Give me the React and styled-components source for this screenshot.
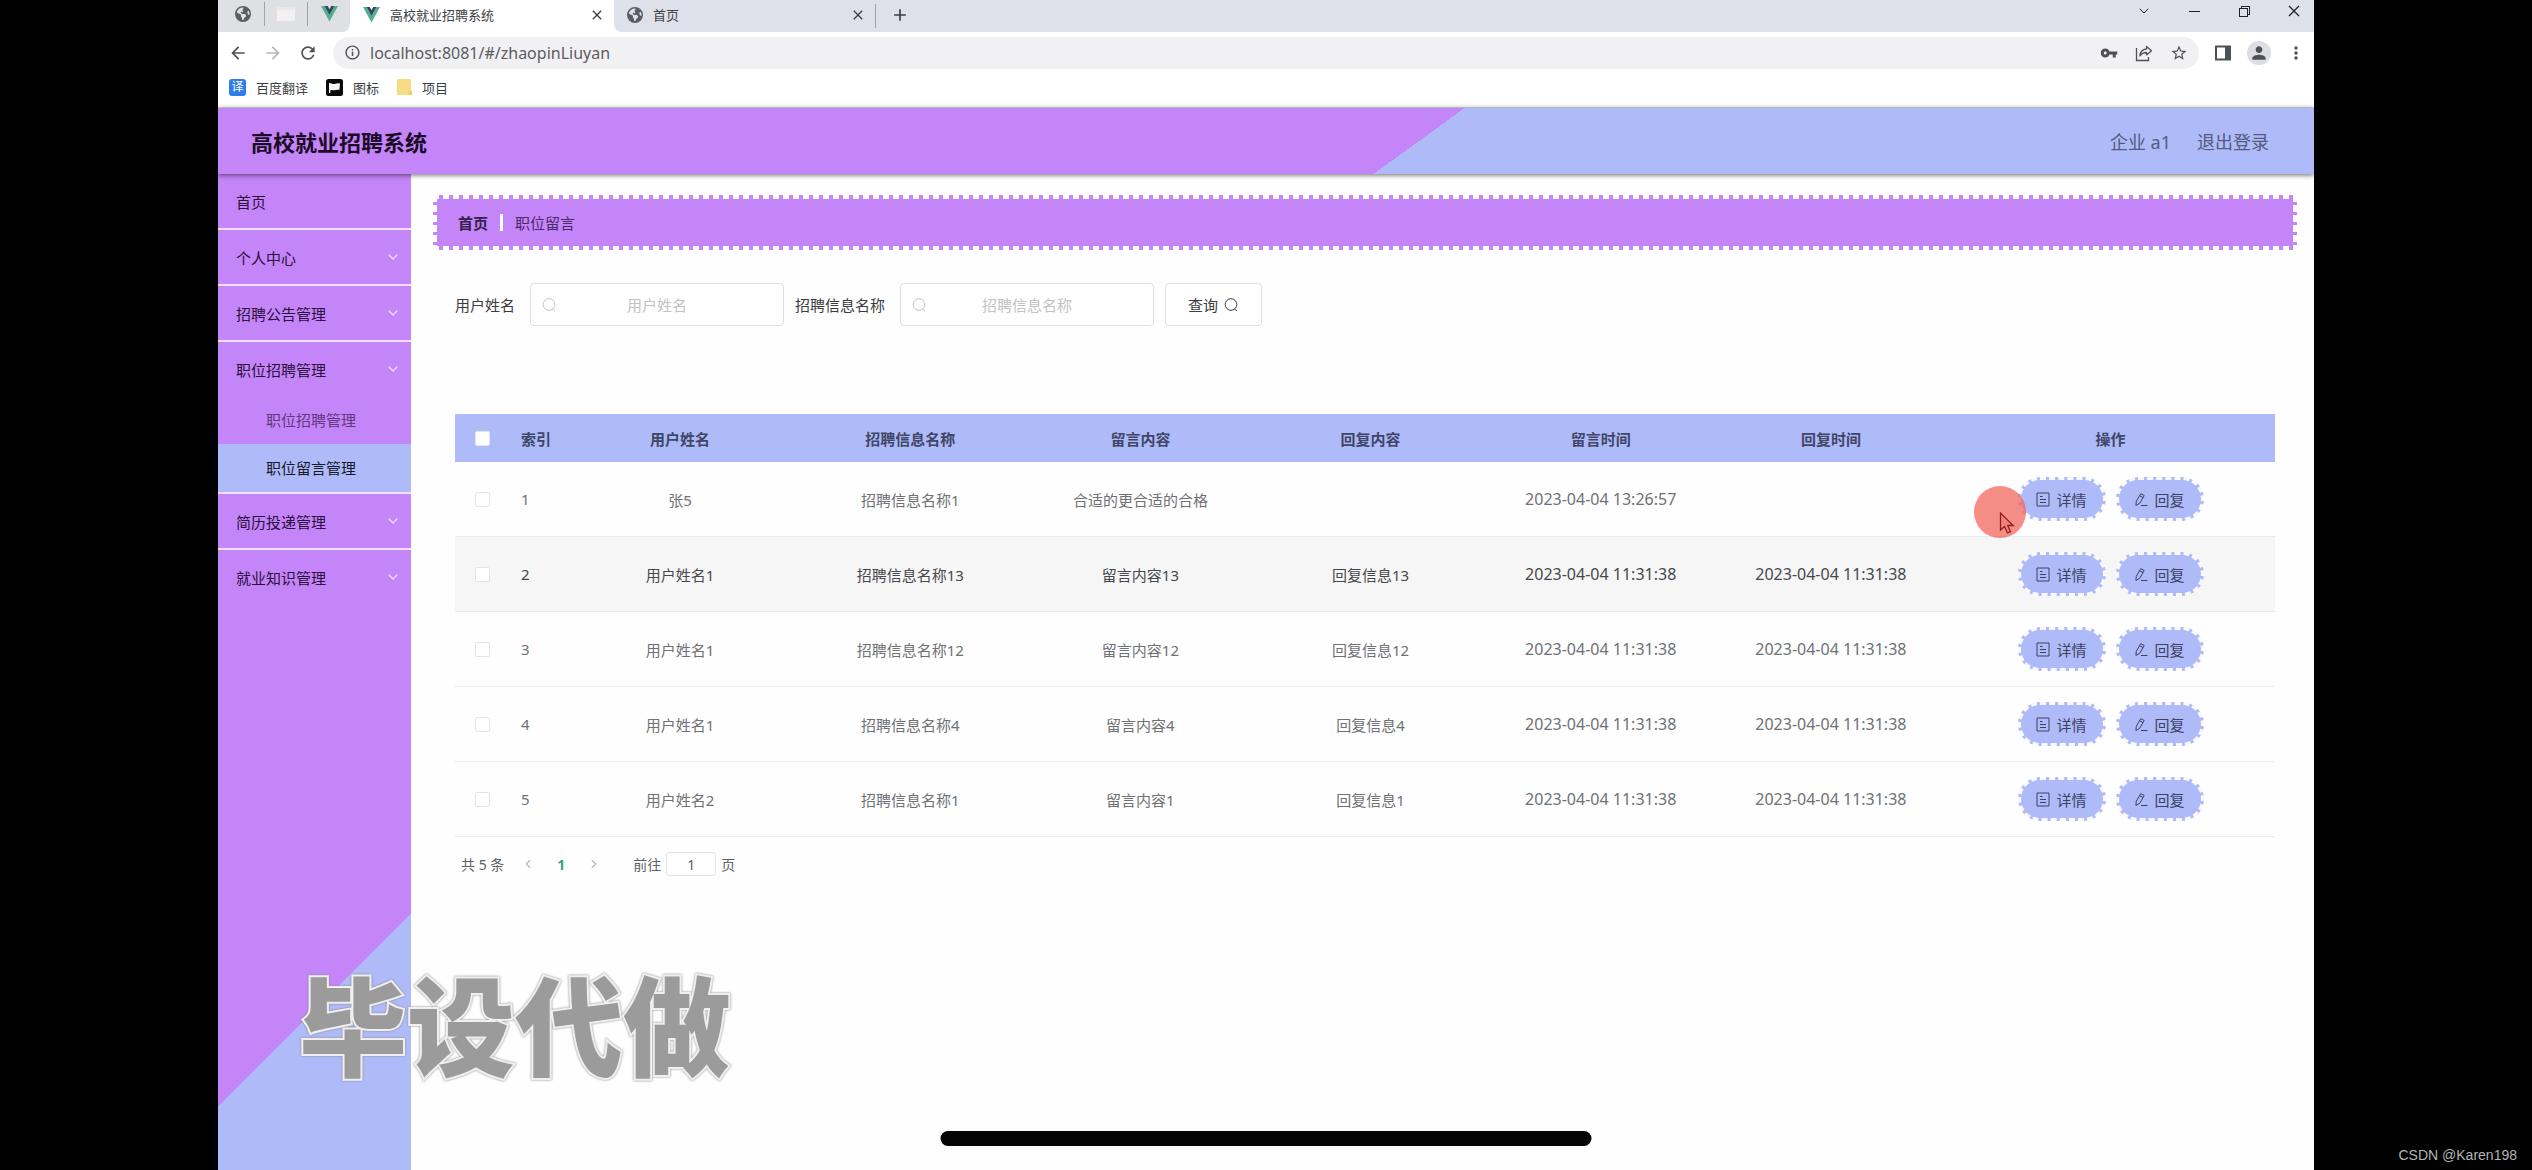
import React from 'react';
import styled, { createGlobalStyle, css } from 'styled-components';
import {
  MdAdd,
  MdArrowBack,
  MdArrowForward,
  MdClose,
  MdInfoOutline,
  MdMoreVert,
  MdPerson,
  MdRefresh,
  MdStarBorder,
  MdVpnKey,
} from 'react-icons/md';
import { FaEarthAmericas } from 'react-icons/fa6';
import { VscChromeClose, VscChromeMinimize, VscChromeRestore } from 'react-icons/vsc';
import { ChevronDown, ChevronLeft, ChevronRight } from 'lucide-react';

const purple = '#c485f9';
const blue = '#afbaf8';

const GlobalStyle = createGlobalStyle`
  * {
    box-sizing: border-box;
  }

  body {
    margin: 0;
    background: #000;
    color: #606266;
    font-family: 'Noto Sans', 'Noto Sans CJK SC', sans-serif;
    font-size: 15px;
  }

  button,
  input {
    font: inherit;
    color: inherit;
  }

  button {
    padding: 0;
    border: 0;
    background: none;
    cursor: pointer;
  }

  a {
    color: inherit;
    text-decoration: none;
  }

  svg {
    display: block;
    flex: none;
  }
`;

const Stage = styled.div`
  position: relative;
  min-height: 100vh;
  padding: 0 218px;
  display: flex;
  overflow: hidden;
`;

const Screen = styled.div`
  position: relative;
  flex: 1;
  min-width: 0;
  display: flex;
  flex-direction: column;
  background: #fefefe;
`;

/* ---------- browser chrome ---------- */

const TabStrip = styled.div`
  display: flex;
  height: 32px;
  background: #fff;
  font-size: 13px;
  color: #3c4043;
`;

const PinnedTabs = styled.div`
  display: flex;
  align-items: center;
  width: 132px;
  padding: 0 0 4px 4px;
  border-bottom-right-radius: 8px;
  background: #dfe0e4;
`;

const PinnedTab = styled.button`
  display: flex;
  flex: 1;
  justify-content: center;
  color: #5a5d62;
`;

const TabDivider = styled.span`
  width: 1px;
  height: 24px;
  background: #a0a2a8;
`;

const Tab = styled.div`
  display: flex;
  align-items: center;
  width: ${(props) => (props.$active ? '264px' : '261px')};
  padding: 0 9px 3px 13px;
`;

const TabTitle = styled.button`
  display: flex;
  align-items: center;
  flex: 1;
  gap: 10px;
`;

const OtherTabs = styled.div`
  display: flex;
  align-items: center;
  flex: 1;
  border-bottom-left-radius: 8px;
  background: #dfe1ea;
`;

const NewTab = styled.button`
  margin-left: 14px;
  padding-bottom: 3px;
`;

const WindowControls = styled.div`
  display: flex;
  gap: 34px;
  margin-left: auto;
  padding: 0 12px 10px 0;
  color: #222;
`;

const Toolbar = styled.div`
  display: flex;
  align-items: center;
  gap: 15px;
  height: 41px;
  padding: 0 8px 0 10px;
  background: #fff;
  color: #4d5055;
`;

const ToolButton = styled.button`
  color: ${(props) => (props.disabled ? '#b5b7ba' : 'inherit')};
`;

const Omnibox = styled.label`
  display: flex;
  align-items: center;
  flex: 1;
  gap: 9px;
  height: 32px;
  padding: 0 11px;
  border-radius: 16px;
  background: #f1f1f3;
`;

const UrlInput = styled.input`
  flex: 1;
  padding: 0;
  border: 0;
  outline: 0;
  background: none;
  color: #5a5c60;
  font-size: 16px;
`;

const OmniboxActions = styled.span`
  display: flex;
  gap: 17px;
`;

const Avatar = styled.button`
  display: flex;
  align-items: center;
  justify-content: center;
  width: 24px;
  height: 24px;
  border-radius: 50%;
  background: #dcdde5;
`;

const Bookmarks = styled.nav`
  display: flex;
  align-items: center;
  gap: 18px;
  height: 35px;
  padding: 0 11px 6px;
  border-bottom: 1px solid #dcdde3;
  background: #fff;
  color: #3c4043;
  font-size: 13px;
`;

const Bookmark = styled.a`
  display: flex;
  align-items: center;
  gap: 10px;
`;

const TranslateBadge = styled.span`
  width: 17px;
  height: 17px;
  border-radius: 3px;
  background: #2f7de9;
  color: #fff;
  font-size: 12px;
  line-height: 16px;
  text-align: center;
`;

/* ---------- page ---------- */

const Header = styled.header`
  position: relative;
  z-index: 1;
  display: flex;
  align-items: center;
  justify-content: space-between;
  height: 66px;
  padding: 0 45px 0 33px;
  background: linear-gradient(144deg, ${purple} 57%, ${blue} 57%);
  box-shadow: 0 1px 5px rgba(0, 0, 0, 0.6);
`;

const SiteTitle = styled.h1`
  margin: 0;
  color: #1c0b28;
  font-size: 22px;
  font-weight: 700;
`;

const UserLinks = styled.div`
  display: flex;
  gap: 26px;
  color: #545b7e;
  font-size: 18px;
`;

const Body = styled.div`
  display: flex;
  flex: 1;
`;

const Sidebar = styled.nav`
  width: 193px;
  background: linear-gradient(135deg, ${purple} 78.4%, ${blue} 78.4%);
`;

const MenuGroup = styled.div`
  border-bottom: 2px solid #f3e0ff;

  &:last-child {
    border-bottom: 0;
  }
`;

const MenuItem = styled.button`
  display: flex;
  align-items: center;
  justify-content: space-between;
  width: 100%;
  height: 54px;
  padding: 0 10px 0 18px;
  color: #2b0f3c;
`;

const SubItem = styled.a`
  display: block;
  padding-left: 48px;
  color: #61377f;
  line-height: 48px;

  ${(props) =>
    props.$active &&
    css`
      background: ${blue};
      color: #17192b;
    `}
`;

const Main = styled.main`
  flex: 1;
  min-width: 0;
  padding: 21px 17px 22px 22px;
`;

const dashX = 'repeating-linear-gradient(90deg, #fff 0 6px, transparent 6px 10px)';
const dashY = 'repeating-linear-gradient(180deg, #fff 0 7px, transparent 7px 10px)';

const Breadcrumb = styled.nav`
  display: flex;
  align-items: center;
  height: 55px;
  padding: 0 25px;
  border-radius: 4px;
  background:
    ${dashX} top / 100% 4px no-repeat,
    ${dashX} bottom / 100% 4px no-repeat,
    ${dashY} left / 4px 100% no-repeat,
    ${dashY} right / 4px 100% no-repeat,
    ${purple};
  color: #482a69;
`;

const CrumbHome = styled.a`
  color: #33204a;
  font-weight: 700;
`;

const CrumbDivider = styled.span`
  width: 3px;
  height: 17px;
  margin: 0 12px;
  background: #fff;
`;

const Panel = styled.section`
  padding: 33px 22px 0;
`;

const SearchForm = styled.form`
  display: flex;
  align-items: center;
  gap: 11px;
  margin-bottom: 88px;
  color: #3a3c40;
`;

const Field = styled.label`
  display: flex;
  align-items: center;
  gap: 15px;
`;

const InputBox = styled.span`
  display: flex;
  align-items: center;
  width: 254px;
  height: 43px;
  padding: 0 10px;
  border: 1px solid #dfe0e3;
  border-radius: 4px;
  background: #fff;
  color: #c0c4cc;
`;

const TextInput = styled.input`
  flex: 1;
  min-width: 0;
  padding: 0 16px 0 0;
  border: 0;
  outline: 0;
  background: none;
  color: #606266;
  text-align: center;

  &::placeholder {
    color: #c0c2c6;
    opacity: 1;
  }
`;

const QueryButton = styled.button`
  display: flex;
  align-items: center;
  justify-content: center;
  gap: 5px;
  width: 97px;
  height: 43px;
  border: 1px solid #dfe0e3;
  border-radius: 4px;
  background: #fff;
`;

const Table = styled.table`
  width: 100%;
  border-collapse: separate;
  border-spacing: 0;
  table-layout: fixed;
`;

const Col = styled.col`
  width: ${(props) => props.$width};
`;

const Th = styled.th`
  height: 48px;
  padding: 0;
  background: ${blue};
  color: #3f4668;
  font-weight: 700;
  text-align: ${(props) => props.$align || 'center'};
`;

const Td = styled.td`
  height: 75px;
  padding: 0;
  border-bottom: 1px solid #e9eaee;
  font-size: ${(props) => (props.$date ? '16px' : '15px')};
  text-align: ${(props) => props.$align || 'center'};
`;

const Row = styled.tr`
  color: ${(props) => (props.$hover ? '#46484c' : '#6f7175')};
  background: ${(props) => (props.$hover ? '#f6f6f7' : 'transparent')};
`;

const Indent = styled.span`
  padding-left: 11px;
`;

const Checkbox = styled.input.attrs({ type: 'checkbox' })`
  display: block;
  width: 15px;
  height: 15px;
  margin: 0 auto;
  border: 1px solid #e2e4e8;
  border-radius: 2px;
  background: #fff;
  appearance: none;
`;

const Actions = styled.div`
  display: flex;
  justify-content: center;
  gap: 10px;
`;

const PillButton = styled.button`
  display: flex;
  align-items: center;
  justify-content: center;
  gap: 6px;
  width: 88px;
  height: 44px;
  border: 3px dashed #fafafc;
  border-radius: 22px;
  background: ${blue};
  color: #3d4263;
`;

const Pagination = styled.nav`
  display: flex;
  align-items: center;
  height: 54px;
  padding-left: 6px;
  font-size: 14px;
`;

const Pager = styled.div`
  display: flex;
  align-items: center;
  gap: 22px;
  margin: 0 32px 0 17px;
  color: #b4b8c0;
`;

const PageNumber = styled.button`
  color: #35a585;
  font-weight: 700;
`;

const JumpLabel = styled.label`
  display: flex;
  align-items: center;
  gap: 5px;
`;

const JumpInput = styled.input`
  width: 50px;
  height: 24px;
  padding: 0;
  border: 1px solid #e0e2e7;
  border-radius: 3px;
  background: #fff;
  text-align: center;
`;

/* ---------- overlays ---------- */

const Watermark = styled.div`
  position: absolute;
  bottom: 89px;
  left: 81px;
  z-index: 2;
  color: #9b9b9b;
  font-size: 108px;
  font-weight: 900;
  line-height: 1;
  white-space: nowrap;
  paint-order: stroke fill;
  -webkit-text-stroke: 4px #efefef;
  filter: drop-shadow(0 0 1px #888);
`;

const Pointer = styled.svg`
  position: absolute;
  top: 486px;
  right: 288px;
  z-index: 2;
`;

const HomeIndicator = styled.div`
  position: absolute;
  bottom: 24px;
  left: 50%;
  z-index: 2;
  width: 651px;
  height: 15px;
  border-radius: 8px;
  background: #050505;
  transform: translateX(-50%);
`;

const Credit = styled.div`
  position: absolute;
  right: 15px;
  bottom: 7px;
  color: #b4b4b4;
  font-family: 'Liberation Sans', sans-serif;
  font-size: 14px;
`;

/* ---------- icons ---------- */

const VueLogo = () => (
  <svg width="17" height="16" viewBox="0 0 17 16">
    <path d="M0 0h3.5l5 9 5-9H17L8.5 15.5z" fill="#4fb08b" />
    <path d="M3.5 0h3.2l1.8 3.2L10.3 0h3.2l-5 9z" fill="#33475c" />
  </svg>
);

const BlankPage = () => (
  <svg width="18" height="14" viewBox="0 0 18 14">
    <rect width="18" height="14" fill="#f4f0f2" />
    <path d="M0 0h18v3H0z" fill="#e3eae8" />
  </svg>
);

const ShareIcon = () => (
  <svg width="18" height="18" viewBox="0 0 18 18" fill="none" stroke="currentColor" strokeWidth="1.3">
    <path d="M1.5 4v12.5h12V13" />
    <path d="M11.5 2.5l5 4.2-5 4.2V8.5C8.5 8.5 6.5 9.5 4.8 12c.4-4 3-6.7 6.7-7z" strokeLinejoin="round" />
  </svg>
);

const SidePanelIcon = () => (
  <svg width="18" height="18" viewBox="0 0 18 18">
    <path d="M2 2.5h14v13H2z" fill="none" stroke="currentColor" strokeWidth="2" />
    <path d="M11 2h5v14h-5z" fill="currentColor" />
  </svg>
);

const FlagIcon = () => (
  <svg width="17" height="17" viewBox="0 0 17 17">
    <rect width="17" height="17" rx="2.5" fill="#0a0a0a" />
    <path d="M3 4c2-.6 3.500 1.600 5.500 1S12 3.800 14 4.500l-.6 6.500c-2-.7-3 0-4.700.3S6 10.600 4.300 11.400V14H3z" fill="#f4f4f4" />
  </svg>
);

const FolderIcon = () => (
  <svg width="15" height="16" viewBox="0 0 15 16">
    <path d="M1 0h12a1 1 0 0 1 1 1v10l1 1v3a1 1 0 0 1-1 1H1a1 1 0 0 1-1-1V1a1 1 0 0 1 1-1z" fill="#f6dc85" />
    <path d="M11.5 12H15v4h-3.5z" fill="#efcf6c" />
  </svg>
);

const SearchIcon = () => (
  <svg width="16" height="16" viewBox="0 0 16 16" fill="none" stroke="currentColor" strokeWidth="1">
    <circle cx="8" cy="7.5" r="5.8" />
    <path d="M11.5 12l2.5 2" />
  </svg>
);

const DocumentIcon = () => (
  <svg width="14" height="15" viewBox="0 0 14 15" fill="none" stroke="currentColor" strokeWidth="1">
    <path d="M1 1h12v13H1z" />
    <path d="M4 4.5h2.5M4 7.5h6M4 10.5h6" />
  </svg>
);

const EditIcon = () => (
  <svg width="14" height="15" viewBox="0 0 14 15" fill="none" stroke="currentColor" strokeWidth="1">
    <path d="M6.8 1.6l3.4 1.9-4.4 7.7-3.9 2.300.4-4.300z" strokeLinejoin="round" />
    <path d="M5.600 3.700L9 5.600M7 13.500h6.500" />
  </svg>
);

/* ---------- data ---------- */

const menu = [
  { name: '首页' },
  { name: '个人中心', arrow: true },
  { name: '招聘公告管理', arrow: true },
  {
    name: '职位招聘管理',
    arrow: true,
    children: [{ name: '职位招聘管理' }, { name: '职位留言管理', active: true }],
  },
  { name: '简历投递管理', arrow: true },
  { name: '就业知识管理', arrow: true },
];

const headers = ['用户姓名', '招聘信息名称', '留言内容', '回复内容', '留言时间', '回复时间', '操作'];

const rows = [
  { id: 1, user: '张5', job: '招聘信息名称1', message: '合适的更合适的合格', reply: '', sentAt: '2023-04-04 13:26:57', repliedAt: '' },
  { id: 2, user: '用户姓名1', job: '招聘信息名称13', message: '留言内容13', reply: '回复信息13', sentAt: '2023-04-04 11:31:38', repliedAt: '2023-04-04 11:31:38', hover: true },
  { id: 3, user: '用户姓名1', job: '招聘信息名称12', message: '留言内容12', reply: '回复信息12', sentAt: '2023-04-04 11:31:38', repliedAt: '2023-04-04 11:31:38' },
  { id: 4, user: '用户姓名1', job: '招聘信息名称4', message: '留言内容4', reply: '回复信息4', sentAt: '2023-04-04 11:31:38', repliedAt: '2023-04-04 11:31:38' },
  { id: 5, user: '用户姓名2', job: '招聘信息名称1', message: '留言内容1', reply: '回复信息1', sentAt: '2023-04-04 11:31:38', repliedAt: '2023-04-04 11:31:38' },
];

const BrowserChrome = () => (
  <div>
    <TabStrip>
      <PinnedTabs>
        <PinnedTab aria-label="Pinned tab"><FaEarthAmericas size={16} /></PinnedTab>
        <TabDivider />
        <PinnedTab aria-label="Pinned tab"><BlankPage /></PinnedTab>
        <TabDivider />
        <PinnedTab aria-label="Pinned tab"><VueLogo /></PinnedTab>
      </PinnedTabs>
      <Tab $active>
        <TabTitle><VueLogo />高校就业招聘系统</TabTitle>
        <button aria-label="Close tab"><MdClose size={16} /></button>
      </Tab>
      <OtherTabs>
        <Tab>
          <TabTitle><FaEarthAmericas size={16} color="#5a5d62" />首页</TabTitle>
          <button aria-label="Close tab"><MdClose size={16} /></button>
        </Tab>
        <TabDivider />
        <NewTab aria-label="New tab"><MdAdd size={20} /></NewTab>
        <WindowControls>
          <button aria-label="Search tabs"><ChevronDown size={16} strokeWidth={1.5} /></button>
          <button aria-label="Minimize"><VscChromeMinimize size={16} /></button>
          <button aria-label="Restore"><VscChromeRestore size={16} /></button>
          <button aria-label="Close"><VscChromeClose size={16} /></button>
        </WindowControls>
      </OtherTabs>
    </TabStrip>
    <Toolbar>
      <ToolButton aria-label="Back"><MdArrowBack size={20} /></ToolButton>
      <ToolButton aria-label="Forward" disabled><MdArrowForward size={20} /></ToolButton>
      <ToolButton aria-label="Reload"><MdRefresh size={20} /></ToolButton>
      <Omnibox>
        <MdInfoOutline size={17} />
        <UrlInput aria-label="Address" defaultValue="localhost:8081/#/zhaopinLiuyan" />
        <OmniboxActions>
          <MdVpnKey size={18} />
          <ShareIcon />
          <MdStarBorder size={18} />
        </OmniboxActions>
      </Omnibox>
      <ToolButton aria-label="Side panel"><SidePanelIcon /></ToolButton>
      <Avatar aria-label="Profile"><MdPerson size={20} /></Avatar>
      <ToolButton aria-label="Menu"><MdMoreVert size={20} /></ToolButton>
    </Toolbar>
    <Bookmarks>
      <Bookmark href="#fanyi"><TranslateBadge>译</TranslateBadge>百度翻译</Bookmark>
      <Bookmark href="#icons"><FlagIcon />图标</Bookmark>
      <Bookmark href="#projects"><FolderIcon />项目</Bookmark>
    </Bookmarks>
  </div>
);

const SideMenu = () => (
  <Sidebar>
    {menu.map((item) => (
      <MenuGroup key={item.name}>
        <MenuItem>
          {item.name}
          {item.arrow && <ChevronDown size={16} color="#f3d9ff" strokeWidth={2} />}
        </MenuItem>
        {item.children &&
          item.children.map((child) => (
            <SubItem key={child.name} href="#/zhaopinLiuyan" $active={child.active}>
              {child.name}
            </SubItem>
          ))}
      </MenuGroup>
    ))}
  </Sidebar>
);

const SearchField = ({ label }) => (
  <Field>
    {label}
    <InputBox>
      <SearchIcon />
      <TextInput type="text" placeholder={label} />
    </InputBox>
  </Field>
);

const MessageTable = () => (
  <Table>
    <colgroup>
      <Col $width="55px" />
      <Col $width="55px" />
      <Col span={6} />
      <Col $width="329px" />
    </colgroup>
    <thead>
      <tr>
        <Th><Checkbox aria-label="Select all" /></Th>
        <Th $align="left"><Indent>索引</Indent></Th>
        {headers.map((name) => (
          <Th key={name}>{name}</Th>
        ))}
      </tr>
    </thead>
    <tbody>
      {rows.map((row) => (
        <Row key={row.id} $hover={row.hover}>
          <Td><Checkbox aria-label={`Select row ${row.id}`} /></Td>
          <Td $align="left"><Indent>{row.id}</Indent></Td>
          <Td>{row.user}</Td>
          <Td>{row.job}</Td>
          <Td>{row.message}</Td>
          <Td>{row.reply}</Td>
          <Td $date>{row.sentAt}</Td>
          <Td $date>{row.repliedAt}</Td>
          <Td>
            <Actions>
              <PillButton><DocumentIcon />详情</PillButton>
              <PillButton><EditIcon />回复</PillButton>
            </Actions>
          </Td>
        </Row>
      ))}
    </tbody>
  </Table>
);

const App = () => (
  <Stage>
    <GlobalStyle />
    <Screen>
      <BrowserChrome />
      <Header>
        <SiteTitle>高校就业招聘系统</SiteTitle>
        <UserLinks>
          <span>企业 a1</span>
          <a href="#/login">退出登录</a>
        </UserLinks>
      </Header>
      <Body>
        <SideMenu />
        <Main>
          <Breadcrumb>
            <CrumbHome href="#/">首页</CrumbHome>
            <CrumbDivider />
            <span>职位留言</span>
          </Breadcrumb>
          <Panel>
            <SearchForm>
              <SearchField label="用户姓名" />
              <SearchField label="招聘信息名称" />
              <QueryButton type="button">查询<SearchIcon /></QueryButton>
            </SearchForm>
            <MessageTable />
            <Pagination>
              <span>共 5 条</span>
              <Pager>
                <button aria-label="Previous page"><ChevronLeft size={14} /></button>
                <PageNumber>1</PageNumber>
                <button aria-label="Next page"><ChevronRight size={14} /></button>
              </Pager>
              <JumpLabel>
                前往
                <JumpInput type="text" defaultValue="1" />
                页
              </JumpLabel>
            </Pagination>
          </Panel>
        </Main>
      </Body>
      <Watermark>毕设代做</Watermark>
      <Pointer width="52" height="52" viewBox="0 0 52 52">
        <circle cx="26" cy="26" r="26" fill="#f0675c" fillOpacity="0.75" />
        <path
          d="M26.5 27v17l4-3.5 3 6.5 3-1.3-2.8-6.2h5.5z"
          fill="#ef8379"
          stroke="#8e1f1b"
          strokeWidth="1.3"
        />
      </Pointer>
    </Screen>
    <HomeIndicator />
    <Credit>CSDN @Karen198</Credit>
  </Stage>
);

export default App;
